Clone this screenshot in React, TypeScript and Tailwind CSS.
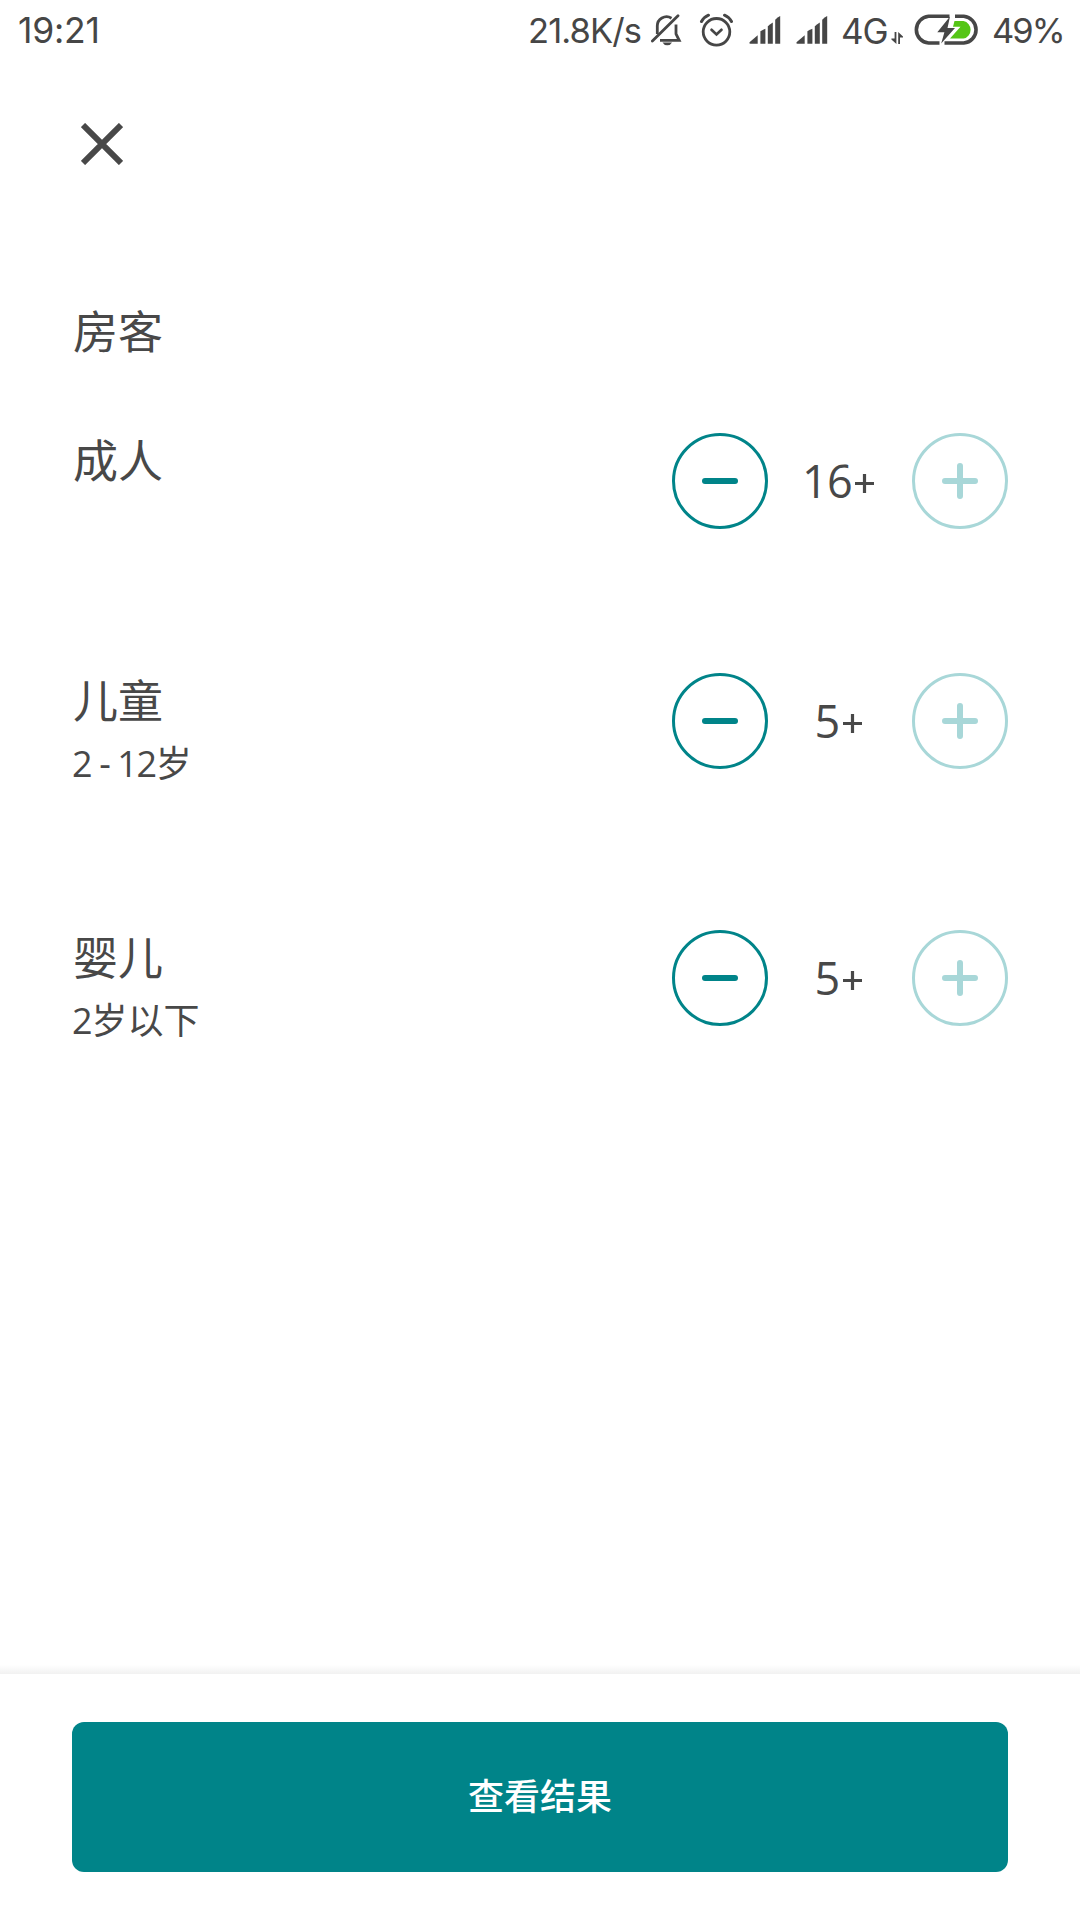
import React from "react";

const ink = "#464646";

function BellOff() {
  return (
    <svg width="32" height="34" viewBox="0 0 32 34" fill="none" stroke={ink} strokeWidth="2.8">
      <path d="M7.3 20V12.5A9.3 9.3 0 0 1 21.5 4.2" />
      <path d="M26 10.5V20L29.2 26.3H10" />
      <path d="M2.4 27L28 1.8" strokeLinecap="round" />
      <path d="M12.5 28.5H22A5.4 5.4 0 0 1 12.5 28.5Z" fill={ink} stroke="none" />
    </svg>
  );
}

function Alarm() {
  return (
    <svg width="34" height="34" viewBox="0 0 34 34" fill="none" stroke={ink} strokeWidth="2.8" strokeLinecap="round">
      <circle cx="17.5" cy="18.8" r="13.3" />
      <path d="M12.5 16.8L17.5 21.5L22.5 16.8" strokeWidth="2.7" />
      <path d="M2.5 8.5Q5 4 9.5 2.2M32.5 8.5Q30 4 25.5 2.2" strokeWidth="3" />
    </svg>
  );
}

function Signal() {
  return (
    <svg width="32" height="28" viewBox="0 0 32 28" fill={ink}>
      <path d="M0.5 26.2L8.7 19.2V27.8H1.5Q0 27.8 0.5 26.2Z" />
      <path d="M11.4 15.3Q14 13.6 16.4 12.7V27.8H11.4Z" />
      <path d="M18.8 10.3Q21.2 8 23.8 6.5V27.8H18.8Z" />
      <path d="M26.2 3.8Q28.6 1 31.2 0V27.8H26.2Z" />
    </svg>
  );
}

function DataArrows() {
  return (
    <svg width="12" height="12" viewBox="0 0 12 12" fill={ink}>
      <path d="M3.6 0H5.4V12L0.4 7.6V6.4H3.6Z" />
      <path d="M7.2 12H9V5.4H12V4.4L7.2 0Z" />
    </svg>
  );
}

function Battery() {
  return (
    <svg width="67" height="32" viewBox="0 0 67 32" fill="none">
      <path d="M36.5 2.3H15.6A13.4 13.4 0 0 0 15.6 29H26.5M42 2.3H50.8A13.4 13.4 0 0 1 50.8 29H31.5" stroke={ink} strokeWidth="3.6" />
      <path d="M41.5 7H50.5A9 9 0 0 1 50.5 24.6H37L47.5 12.7H40Z" fill="#55c516" />
      <path d="M37 2.5L24.3 18.2H31.4L28.2 29.5L42 14H34.5Z" fill={ink} />
    </svg>
  );
}

function StatusBar() {
  return (
    <header className="flex h-[62px] shrink-0 items-start pl-[18px] font-[Inter,sans-serif] text-[35.5px] font-[380] leading-[62px] whitespace-nowrap text-[#464646]">
      <span className="w-[510px] tracking-[-0.2px]">19:21</span>
      <span className="w-[122px] text-[34.5px] tracking-[-0.9px]">21.8K/s</span>
      <span className="mt-[14px] w-[49px]"><BellOff /></span>
      <span className="mt-[13px] w-[50px]"><Alarm /></span>
      <span className="mt-[16px] w-[47px]"><Signal /></span>
      <span className="mt-[16px] w-[45px]"><Signal /></span>
      <span className="w-[50px] text-[35px] tracking-[-1px]">4G</span>
      <span className="mt-[32px] w-[22px]"><DataArrows /></span>
      <span className="mt-[14px] w-[79px]"><Battery /></span>
      <span className="text-[34.5px] tracking-[-2px]">49%</span>
    </header>
  );
}

function RoundButton({ kind }: { kind: "minus" | "plus" }) {
  return (
    <button
      aria-label={kind}
      className={
        kind === "minus"
          ? "flex size-24 items-center justify-center rounded-full border-[3px] border-[#008489] text-[#008489]"
          : "flex size-24 items-center justify-center rounded-full border-[3px] border-[#a8d7d8] text-[#a8d7d8]"
      }
    >
      <svg width="36" height="36" viewBox="0 0 36 36" stroke="currentColor" strokeWidth="6" strokeLinecap="round">
        <path d={kind === "minus" ? "M3 18H33" : "M3 18H33M18 3V33"} />
      </svg>
    </button>
  );
}

type GuestRowProps = { label: string; note?: React.ReactNode; count: string; className: string };

function GuestRow({ label, note, count, className }: GuestRowProps) {
  return (
    <section className={className}>
      <div className="flex-1">
        <h2 className="-mt-[2px] pl-px text-[45px] leading-[60px]">{label}</h2>
        {note && <p className="mt-[7px] text-[36px] leading-[52px]">{note}</p>}
      </div>
      <div className="flex items-center">
        <RoundButton kind="minus" />
        <span className="flex w-36 items-center justify-center pr-[4px] text-[45px] leading-[60px] tracking-[-0.7px]">
          {count}
          <svg className="mt-[4px] ml-[3px]" width="19" height="19" viewBox="0 0 19 19" stroke="#484848" strokeWidth="3.2">
            <path d="M0 9.5H19M9.5 0V19" />
          </svg>
        </span>
        <RoundButton kind="plus" />
      </div>
    </section>
  );
}

export default function App() {
  return (
    <div className="flex h-[1920px] w-[1080px] flex-col overflow-hidden bg-white font-['Open_Sans','Noto_Sans_CJK_SC',sans-serif] text-[#484848]">
      <StatusBar />
      <main className="flex flex-1 flex-col px-[72px]">
        <button aria-label="关闭" className="mt-[61px] ml-[9px] size-[42px]">
          <svg width="42" height="42" viewBox="0 0 42 42" stroke="#484848" strokeWidth="5.9">
            <path d="M2 2L40 40M40 2L2 40" />
          </svg>
        </button>
        <h1 className="mt-[137px] pl-px text-[45px] leading-[60px]">房客</h1>
        <GuestRow className="mt-[71px] flex h-24 items-start" label="成人" count="16" />
        <GuestRow
          className="mt-[144px] flex h-24 items-start"
          label="儿童"
          note={<><span className="tracking-[-1.4px]">2 - 12</span>岁</>}
          count="5"
        />
        <GuestRow
          className="mt-[161px] flex h-24 items-start"
          label="婴儿"
          note={<><span className="tracking-[-1px]">2</span>岁以下</>}
          count="5"
        />
      </main>
      <div className="h-[9px] shrink-0 bg-linear-to-b from-white to-[#f1f1f1]" />
      <footer className="h-[246px] shrink-0 px-[72px] pt-[48px]">
        <button className="flex h-[150px] w-full items-center justify-center rounded-xl bg-[#008489] pb-[6px] font-['Noto_Sans_CJK_SC',sans-serif] text-[36px] font-medium leading-[54px] text-white">
          查看结果
        </button>
      </footer>
    </div>
  );
}
